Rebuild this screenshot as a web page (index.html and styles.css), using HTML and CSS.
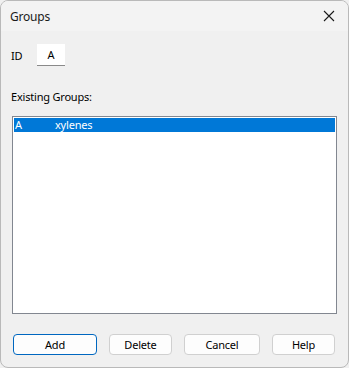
FILE: index.html
```html
<!DOCTYPE html>
<html lang="en">
<head>
  <meta charset="UTF-8" />
  <title>Groups</title>
  <link rel="stylesheet" href="styles.css">
</head>
<body>
  <div class="window">
    <div class="titlebar">
      <span class="title">Groups</span>
      <svg class="close" width="12" height="12" viewBox="0 0 12 12">
        <path d="M1 1 L11 11 M11 1 L1 11" stroke="#1a1a1a" stroke-width="1.1" fill="none"/>
      </svg>
    </div>
    <div class="content">
      <div class="id-row">
        <span class="label">ID</span>
        <div class="id-box">A</div>
      </div>
      <div class="list-label">Existing Groups:</div>
      <div class="list">
        <div class="list-item selected">
          <span class="col-id">A</span>
          <span class="col-name">xylenes</span>
        </div>
      </div>
      <div class="buttons">
        <button class="btn btn-add default">Add</button>
        <button class="btn btn-delete">Delete</button>
        <button class="btn btn-cancel">Cancel</button>
        <button class="btn btn-help">Help</button>
      </div>
    </div>
  </div>
</body>
</html>
```

FILE: styles.css
```css
* {
  box-sizing: border-box;
}

body {
  margin: 0;
  font-family: 'Noto Sans', 'Liberation Sans', sans-serif;
  font-size: 11px;
  letter-spacing: -0.2px;
  color: #000;
  background: #f0f0f0;
}

.window {
  width: 349px;
  height: 368px;
  border: 1px solid #b9b9b9;
  border-radius: 8px;
  background: #f0f0f0;
  overflow: hidden;
  display: flex;
  flex-direction: column;
}

.titlebar {
  height: 30px;
  background: #f3f3f3;
  display: flex;
  align-items: center;
  justify-content: space-between;
  padding: 0 13px 0 9px;
  flex-shrink: 0;
}

.title {
  font-size: 12px;
  color: #1a1a1a;
}

.content {
  flex: 1;
  padding: 13px 12px 0 10px;
  display: flex;
  flex-direction: column;
}

.id-row {
  display: flex;
  align-items: center;
  height: 22px;
}

.label {
  width: 26px;
}

.id-box {
  width: 28px;
  height: 22px;
  background: #fff;
  border-bottom: 1px solid #8a8a8a;
  display: flex;
  align-items: center;
  justify-content: center;
}

.list-label {
  margin-top: 22px;
  height: 18px;
  line-height: 18px;
}

.list {
  margin-top: 10px;
  margin-left: 1px;
  width: 325px;
  height: 198px;
  background: #fff;
  border: 1px solid #828790;
  padding: 1px;
}

.list-item {
  display: flex;
  height: 14px;
  line-height: 14px;
  padding-left: 1px;
}

.list-item.selected {
  background: #0078d7;
  color: #fff;
}

.col-id {
  width: 40px;
}

.buttons {
  display: flex;
  margin-top: 20px;
  margin-left: 2px;
}

.btn {
  font-family: inherit;
  font-size: 11px;
  letter-spacing: -0.2px;
  height: 21px;
  padding: 0;
  background: #fdfdfd;
  border: 1px solid #d0d0d0;
  border-radius: 4px;
  color: #000;
}

.btn.default {
  border: 1px solid #0067c0;
}

.btn-add {
  width: 84px;
}

.btn-delete {
  width: 63px;
  margin-left: 12px;
}

.btn-cancel {
  width: 76px;
  margin-left: 12px;
}

.btn-help {
  width: 63px;
  margin-left: 12px;
}
```
